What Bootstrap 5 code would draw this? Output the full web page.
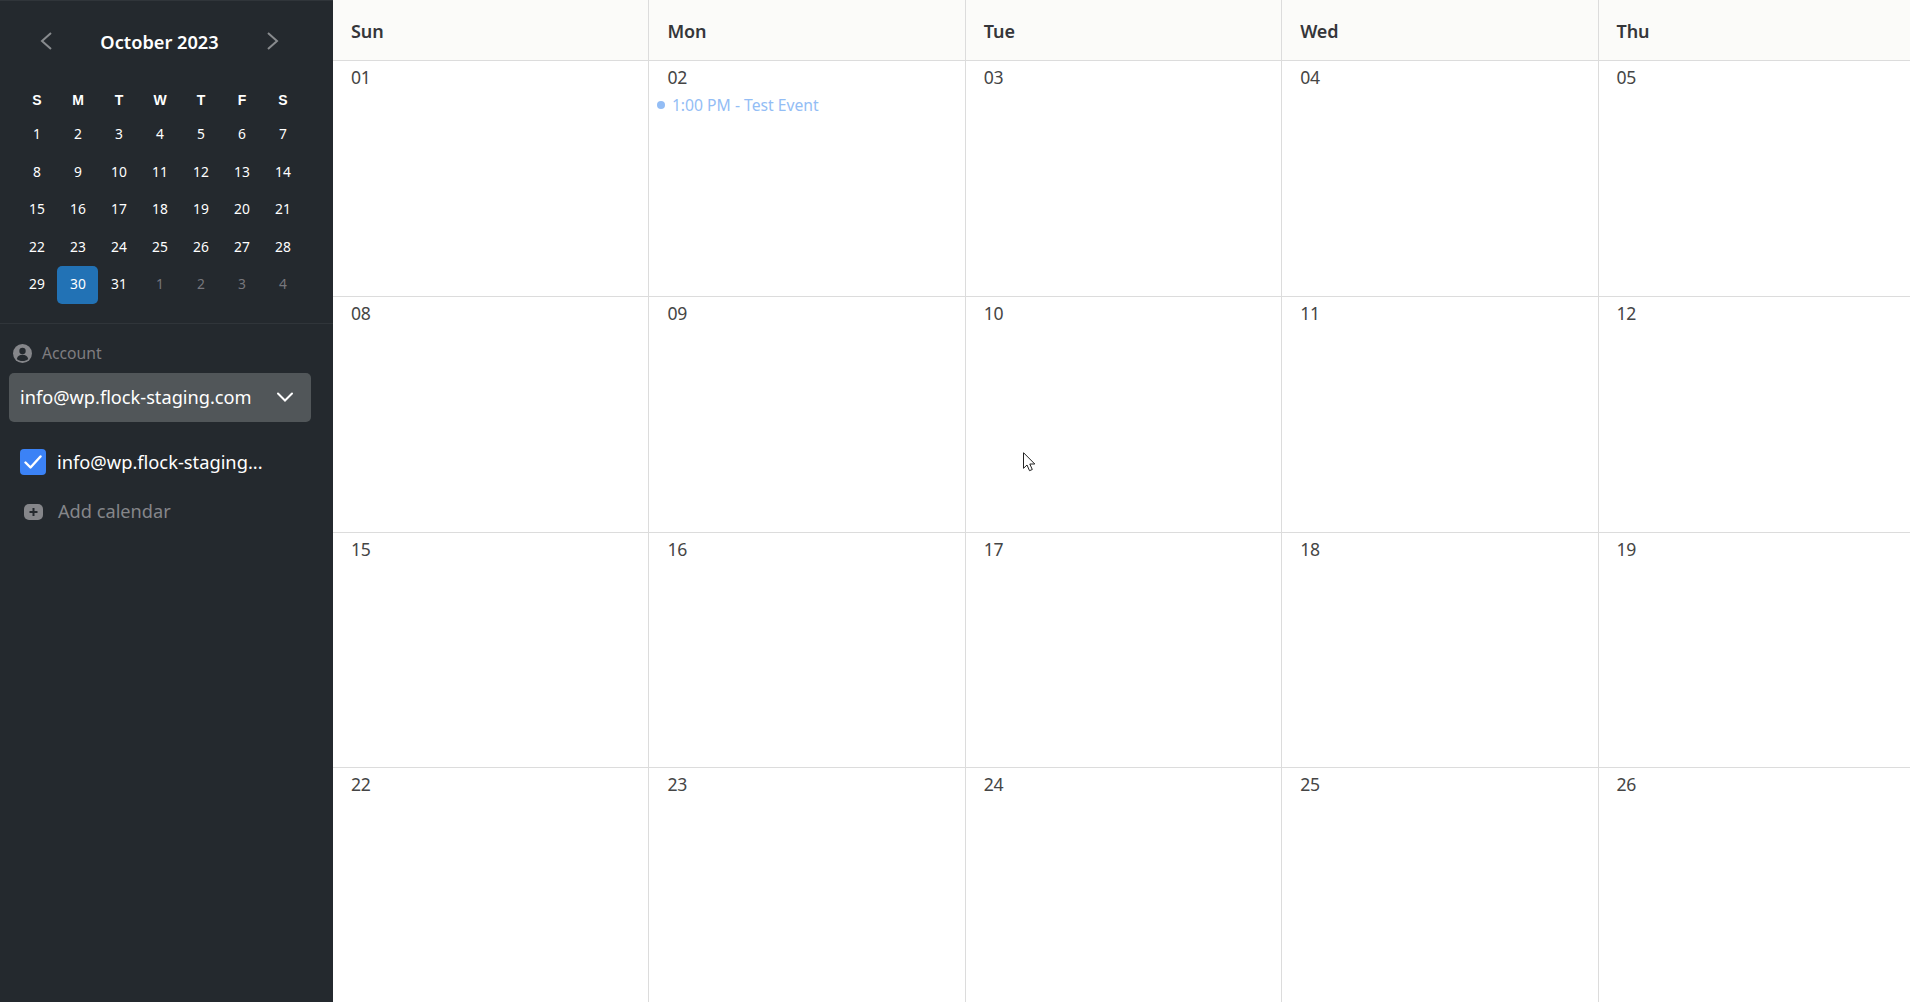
<!DOCTYPE html>
<html lang="en">
<head>
<meta charset="utf-8">
<title>Calendar</title>
<link href="https://cdn.jsdelivr.net/npm/bootstrap@5.3.0/dist/css/bootstrap.min.css" rel="stylesheet">
<style>
html,body{height:100%;overflow:hidden;background:#fff}
body{font-family:"Noto Sans","Liberation Sans",sans-serif;color:#3c3c3c}
.shell{height:1002px;position:relative}
.side{width:333px;flex:none;background:#24292e;color:#fff;border-top:1px solid #30353a}
.mc-wrap{padding:0 0 0 16px;border-bottom:1px solid #30353a;height:323px}
.mc-head{width:287px;height:85px;padding-top:22px}
.mc-nav{width:36px;height:36px;color:#888b8e}
.mc-prev{margin-left:12px}
.mc-next{margin-right:12px}
.mc-title{font-size:18.2px;font-weight:600;line-height:38px}
.mc-grid{display:grid;grid-template-columns:repeat(7,41px);grid-auto-rows:37.5px;font-size:13.8px}
.mc-grid>div{display:flex;align-items:center;justify-content:center;padding-left:1px}
.mc-dow{height:30px;font-family:"Liberation Sans",sans-serif;font-weight:700;font-size:14px;display:grid;grid-template-columns:repeat(7,41px);text-align:center;line-height:29px;padding-left:.5px}
.mc-out{color:#77777d}
.mc-today{background:#2272b5;border-radius:5px}
.acct{height:49px;padding-left:13px;color:#7f7d80;font-size:15.7px;gap:10px;padding-top:10px}
.picker{margin:0 22px 0 9px;height:49px;background:#515659;border-radius:5px;padding:0 18px 0 11px;font-size:18.2px}
.picker svg{margin-bottom:2px}
.cal-row{font-size:18.3px;margin-top:26px;padding-left:20px;gap:11px;height:27px}
.chk{width:26px;height:26px;background:#3b82f6;border-radius:4px}
.add{color:#85868a;margin-top:23.500px;padding-left:24px;gap:15px;height:27px;font-size:18.2px}
.main{width:1577px;overflow:hidden;flex:none}
.hd-row,.wk-row{display:grid;grid-template-columns:repeat(5,316.4px)}
.hd-cell{height:61px;background:#fbfbf9;border-right:1px solid #dcdcdc;border-bottom:1px solid #dcdcdc;padding:20px 0 0 18px;font-weight:600;font-size:18px;line-height:23px;color:#35363a;letter-spacing:-.1px}
.wk-cell{height:235.8px;border-right:1px solid #dcdcdc;border-bottom:1px solid #dcdcdc;padding:5px 0 0 18px;font-size:17.6px;line-height:23px;color:#454545;letter-spacing:-.3px}
.evt{margin:5px 0 0 -10.500px;color:#93bdf5;font-size:15.7px;line-height:22px;gap:7px;letter-spacing:0}
.dot{width:8px;height:8px;border-radius:50%;background:#93bdf5}
.ptr{position:absolute;left:1023px;top:452px}
</style>
</head>
<body>
<div class="shell d-flex">
  <aside class="side">
    <div class="mc-wrap">
      <div class="mc-head d-flex justify-content-between">
        <div class="mc-nav mc-prev d-flex align-items-center justify-content-center">
          <svg width="12" height="18" viewBox="0 0 12 18" fill="none" stroke="currentColor" stroke-width="2"><path d="M11 1 2 9l9 8"/></svg>
        </div>
        <div class="mc-title">October 2023</div>
        <div class="mc-nav mc-next d-flex align-items-center justify-content-center">
          <svg width="12" height="18" viewBox="0 0 12 18" fill="none" stroke="currentColor" stroke-width="2"><path d="m1 1 9 8-9 8"/></svg>
        </div>
      </div>
      <div class="mc-dow"><span>S</span><span>M</span><span>T</span><span>W</span><span>T</span><span>F</span><span>S</span></div>
      <div class="mc-grid">
        <div>1</div><div>2</div><div>3</div><div>4</div><div>5</div><div>6</div><div>7</div>
        <div>8</div><div>9</div><div>10</div><div>11</div><div>12</div><div>13</div><div>14</div>
        <div>15</div><div>16</div><div>17</div><div>18</div><div>19</div><div>20</div><div>21</div>
        <div>22</div><div>23</div><div>24</div><div>25</div><div>26</div><div>27</div><div>28</div>
        <div>29</div><div class="mc-today">30</div><div>31</div><div class="mc-out">1</div><div class="mc-out">2</div><div class="mc-out">3</div><div class="mc-out">4</div>
      </div>
    </div>
    <div class="acct d-flex align-items-center">
      <svg width="19" height="19" viewBox="0 0 19 19"><circle cx="9.5" cy="9.5" r="9.5" fill="#85868a"/><circle cx="9.5" cy="7" r="3.2" fill="#24292e"/><path d="M3.8 15c.6-3 2.800-4.200 5.700-4.200s5.100 1.200 5.700 4.200c-1.400 1.400-3.500 2.100-5.700 2.100S5.200 16.400 3.800 15Z" fill="#24292e"/></svg>
      <span>Account</span>
    </div>
    <div class="picker d-flex align-items-center justify-content-between">
      <span>info@wp.flock-staging.com</span>
      <svg width="16" height="10" viewBox="0 0 16 10" fill="none" stroke="#fff" stroke-width="2" stroke-linecap="round"><path d="m1 1.500 7 7 7-7"/></svg>
    </div>
    <div class="cal-row d-flex align-items-center">
      <span class="chk d-flex align-items-center justify-content-center">
        <svg width="18" height="14" viewBox="0 0 18 14" fill="none" stroke="#fff" stroke-width="2.400" stroke-linecap="round" stroke-linejoin="round"><path d="m1.500 7.500 5 5 10-11"/></svg>
      </span>
      <span>info@wp.flock-staging...</span>
    </div>
    <div class="add d-flex align-items-center">
      <svg width="19" height="16" viewBox="0 0 19 16"><rect width="19" height="16" rx="5" fill="#85868a"/><path d="M9.500 4v8M5.500 8h8" stroke="#24292e" stroke-width="2"/></svg>
      <span>Add calendar</span>
    </div>
  </aside>
  <main class="main">
    <div class="hd-row">
      <div class="hd-cell">Sun</div><div class="hd-cell">Mon</div><div class="hd-cell">Tue</div><div class="hd-cell">Wed</div><div class="hd-cell">Thu</div>
    </div>
    <div class="wk-row">
      <div class="wk-cell">01</div>
      <div class="wk-cell">02
        <div class="evt d-flex align-items-center"><span class="dot"></span><span>1:00 PM - Test Event</span></div>
      </div>
      <div class="wk-cell">03</div><div class="wk-cell">04</div><div class="wk-cell">05</div>
    </div>
    <div class="wk-row"><div class="wk-cell">08</div><div class="wk-cell">09</div><div class="wk-cell">10</div><div class="wk-cell">11</div><div class="wk-cell">12</div></div>
    <div class="wk-row"><div class="wk-cell">15</div><div class="wk-cell">16</div><div class="wk-cell">17</div><div class="wk-cell">18</div><div class="wk-cell">19</div></div>
    <div class="wk-row"><div class="wk-cell">22</div><div class="wk-cell">23</div><div class="wk-cell">24</div><div class="wk-cell">25</div><div class="wk-cell">26</div></div>
  </main>
  <svg class="ptr" width="13" height="20" viewBox="0 0 13 20"><path d="M.5.700v15.600l3.500-3.300 2.500 5.700 2.800-1.200-2.500-5.500h5Z" fill="#fff" stroke="#222" stroke-width="1"/></svg>
</div>
<script src="https://cdn.jsdelivr.net/npm/bootstrap@5.3.0/dist/js/bootstrap.bundle.min.js"></script>
</body>
</html>
